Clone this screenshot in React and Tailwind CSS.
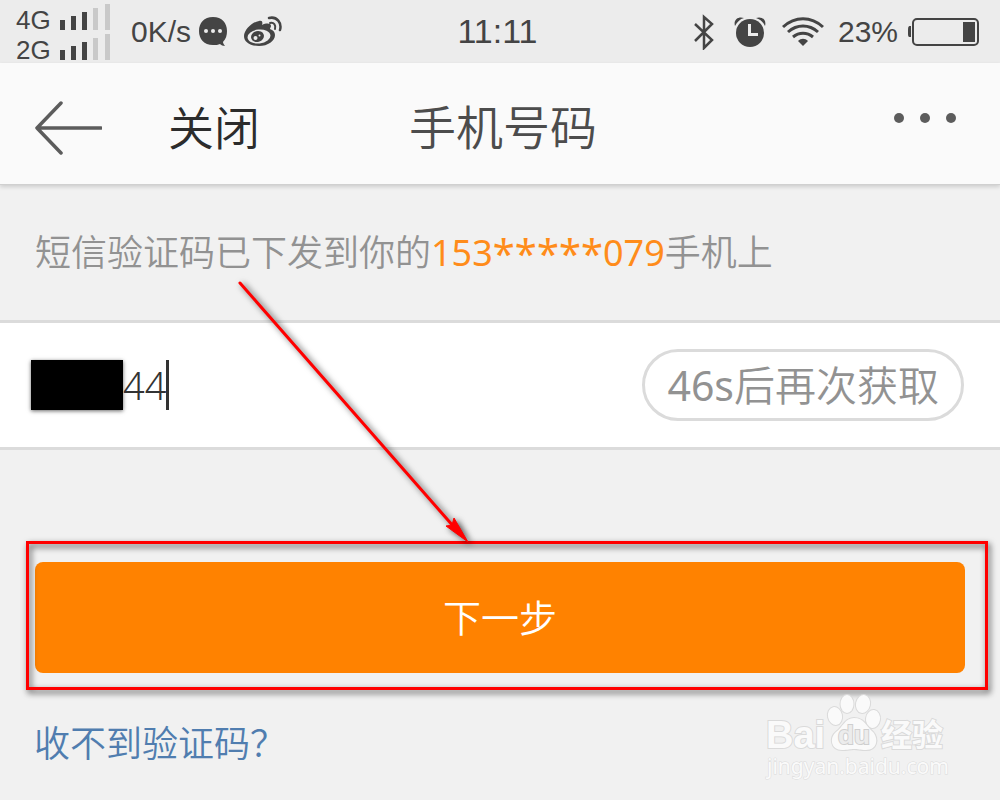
import { useState } from 'react';

const sims = ['4G', '2G'];

const bars = [
  { x: 0, h: 10, on: true },
  { x: 11, h: 14, on: true },
  { x: 22, h: 18, on: true },
  { x: 33, h: 22, on: false },
  { x: 45, h: 26, on: false },
];

function Signal() {
  return (
    <svg width="50" height="27" viewBox="0 0 50 27" aria-hidden="true">
      {bars.map((bar) => (
        <rect
          key={bar.x}
          x={bar.x}
          y={27 - bar.h}
          width="5"
          height={bar.h}
          fill={bar.on ? '#444444' : '#c9c9c9'}
        />
      ))}
    </svg>
  );
}

function ChatIcon() {
  return (
    <svg width="28" height="30" viewBox="0 0 28 30" aria-hidden="true">
      <path
        d="M14 0C5 0 0 6 0 14s5 14 14 14c3 0 5 0 7-1 1 1 3 2 5 2-1-1-2-3-2-4 3-3 4-7 4-11C28 6 23 0 14 0z"
        fill="#444444"
      />
      <circle cx="7" cy="14" r="2" fill="#ececec" />
      <circle cx="14" cy="14" r="2" fill="#ececec" />
      <circle cx="21" cy="14" r="2" fill="#ececec" />
    </svg>
  );
}

function WeiboIcon() {
  return (
    <svg width="40" height="32" viewBox="0 0 40 32" aria-hidden="true">
      <path
        d="M16 5c3-1 4 1 3 4 4-2 9-2 9 1 0 1-1 2-1 3 3 1 5 3 5 6 0 6-7 11-16 11C7 30 1 26 1 20 1 14 9 6 16 5z"
        fill="#444444"
      />
      <ellipse cx="16" cy="20.500" rx="11.500" ry="7" fill="#ececec" transform="rotate(-6 16 20.500)" />
      <ellipse cx="14.500" cy="20.500" rx="6.500" ry="5.500" fill="#444444" transform="rotate(-15 14.500 20.500)" />
      <circle cx="12.500" cy="22" r="2" fill="#ececec" />
      <circle cx="16.500" cy="19.500" r="1" fill="#ececec" />
      <path d="M27 7c4-1 6 2 5 6" fill="none" stroke="#444444" strokeWidth="2" strokeLinecap="round" />
      <path d="M26 2c8-2 13 5 11 12" fill="none" stroke="#444444" strokeWidth="2.500" strokeLinecap="round" />
    </svg>
  );
}

function BluetoothIcon() {
  return (
    <svg width="20" height="36" viewBox="0 0 20 36" aria-hidden="true">
      <path d="M1 10l17 16-8 8V3l8 7L1 27" fill="none" stroke="#444444" strokeWidth="2.500" />
    </svg>
  );
}

function AlarmIcon() {
  return (
    <svg width="32" height="32" viewBox="0 0 32 32" aria-hidden="true">
      <circle cx="16" cy="17" r="14" fill="#444444" />
      <path d="M1 10C-1 3 5 0 10 2 6 3 3 6 1 10zM31 10c2-7-4-10-9-8 4 1 7 4 9 8z" fill="#444444" />
      <path d="M15.500 8v10.500H24" fill="none" stroke="#ececec" strokeWidth="3" />
    </svg>
  );
}

function WifiIcon() {
  return (
    <svg width="42" height="30" viewBox="0 0 42 30" aria-hidden="true">
      <g fill="none" stroke="#444444" strokeWidth="3">
        <path d="M1 10C13-1 29-1 41 10" />
        <path d="M6 15c9-8 21-8 30 0" />
        <path d="M11 20c6-5 14-5 20 0" />
      </g>
      <path d="M16 24c3-3 7-3 10 0l-5 5z" fill="#444444" />
    </svg>
  );
}

function BatteryIcon() {
  return (
    <svg width="72" height="30" viewBox="0 0 72 30" aria-hidden="true">
      <path d="M4 9H3C1 9 1 11 1 15s0 5 2 5h1z" fill="#444444" />
      <rect x="6" y="2" width="65" height="26" rx="4" fill="none" stroke="#444444" strokeWidth="2" />
      <rect x="56" y="5" width="12" height="20" fill="#444444" />
    </svg>
  );
}

function StatusBar() {
  return (
    <div className="grid grid-cols-[1fr_auto_1fr] items-center h-[63px] pl-4 pr-[21px] bg-[#ececec] text-[#444444] font-['Liberation_Sans',sans-serif]">
      <div className="flex items-center">
        <div className="grid gap-[3px]">
          {sims.map((sim) => (
            <div key={sim} className="flex items-start gap-2 h-[27px] text-[26px] leading-[34px]">
              <span className="w-9">{sim}</span>
              <Signal />
            </div>
          ))}
        </div>
        <span className="ml-[21px] mr-2 text-[30px]">0K/s</span>
        <ChatIcon />
        <span className="ml-4">
          <WeiboIcon />
        </span>
      </div>
      <span className="text-[34px]">11:11</span>
      <div className="flex items-center justify-end">
        <BluetoothIcon />
        <span className="ml-5 mr-4">
          <AlarmIcon />
        </span>
        <WifiIcon />
        <span className="ml-[14px] mr-[9px] text-[30px]">23%</span>
        <BatteryIcon />
      </div>
    </div>
  );
}

function Header() {
  return (
    <header className="relative grid grid-cols-[1fr_auto_1fr] items-center h-[122px] pl-[34px] pr-7 pt-2 bg-[#fafafa] border-b border-[#d0d0d0] shadow-[0_2px_4px_rgba(0,0,0,0.15)]">
      <div className="flex items-center gap-[66px]">
        <button type="button" aria-label="返回">
          <svg width="68" height="54" viewBox="0 0 68 54" aria-hidden="true">
            <path
              d="M27 2L3 27l24 25M3 27h64"
              fill="none"
              stroke="#5c5c5c"
              strokeWidth="3.500"
              strokeLinecap="round"
              strokeLinejoin="round"
            />
          </svg>
        </button>
        <button type="button" className="text-[46px] font-[350] text-[#2c2c2c]">关闭</button>
      </div>
      <h1 className="text-[47px] font-[350] text-[#4c4c4c]">手机号码</h1>
      <button type="button" aria-label="更多" className="justify-self-end flex gap-4 mr-4 pb-5">
        <span className="size-[10px] rounded-full bg-[#5c5c5c]" />
        <span className="size-[10px] rounded-full bg-[#5c5c5c]" />
        <span className="size-[10px] rounded-full bg-[#5c5c5c]" />
      </button>
    </header>
  );
}

function Watermark() {
  return (
    <svg
      width="190"
      height="90"
      viewBox="0 0 190 90"
      className="absolute right-[46px] top-0"
      fill="#fafafa"
      stroke="#dadada"
      strokeWidth="2"
      paintOrder="stroke"
    >
      <text x="2" y="55" fontSize="38" fontWeight="700" fontFamily="Liberation Sans, sans-serif">Bai</text>
      <ellipse cx="71" cy="23" rx="7" ry="9" transform="rotate(-12 71 23)" />
      <ellipse cx="83" cy="11" rx="6.500" ry="9" />
      <ellipse cx="99" cy="11" rx="7" ry="9" transform="rotate(12 99 11)" />
      <ellipse cx="109" cy="26" rx="7" ry="9" transform="rotate(8 109 26)" />
      <path d="M90 25c-9 0-11 9-18 14-7 6-5 18 6 18 6 0 8-1 12-1s6 1 12 1c11 0 13-11 7-18-7-6-9-14-19-14z" />
      <text x="74" y="51" fontSize="26" fontWeight="700" fill="#ececec" stroke="#cfcfcf" fontFamily="Liberation Sans, sans-serif">du</text>
      <text x="117" y="53" fontSize="31" fontWeight="700" fontFamily="Noto Sans CJK SC, sans-serif">经验</text>
      <text x="3" y="81" fontSize="21" strokeWidth="1" fontFamily="Noto Sans, sans-serif">jingyan.baidu.com</text>
    </svg>
  );
}

export default function App() {
  const [code, setCode] = useState('44');

  return (
    <div className="min-h-screen bg-[#f1f1f1] font-['Noto_Sans','Noto_Sans_CJK_SC',sans-serif]">
      <StatusBar />
      <Header />

      <p className="flex items-center h-[135px] px-[35px] text-[36px] font-[350] text-[#929292]">
        <span>短信验证码已下发到你的</span>
        <span className="flex items-center font-normal text-[#ff8c1a]">
          153<span className="text-[40px] leading-[54px]">*****</span>079
        </span>
        <span>手机上</span>
      </p>

      <div className="flex items-center justify-between h-[130px] pl-[31px] pr-9 bg-white border-y-3 border-[#dbdbdb]">
        <div className="flex items-center">
          {/* Hidden digits */}
          <span className="w-[92px] h-[50px] bg-black shadow-[0_1px_4px_rgba(0,0,0,0.6)]" />
          <input
            aria-label="验证码"
            inputMode="numeric"
            value={code}
            onChange={(e) => setCode(e.target.value)}
            className="w-[43px] h-[50px] text-[38px] font-light text-[#333333] outline-none"
          />
          <span className="w-[3px] h-[50px] bg-[#333333]" />
        </div>
        <button
          type="button"
          className="h-[72px] px-[22px] rounded-full border-3 border-[#dbdbdb] text-[41px] leading-[60px] font-[350] text-[#929292]"
        >
          <span className="font-normal">46s</span>后再次获取
        </button>
      </div>

      {/* Submit, with the highlight frame and pointer over it */}
      <div className="relative mx-[35px] mt-[112px]">
        <button type="button" className="w-full h-[111px] rounded-lg bg-[#ff8200] text-[38px] font-[350] text-white">
          下一步
        </button>
        <div className="absolute -left-[9px] -right-[23px] -top-[21px] -bottom-[17px] border-3 border-[#ff0000] drop-shadow-[2px_3px_3px_rgba(0,0,0,0.7)] pointer-events-none" />
        <svg
          width="240"
          height="270"
          viewBox="0 0 240 270"
          className="absolute left-[200px] -top-[284px] drop-shadow-[3px_2px_3px_rgba(0,0,0,0.7)] pointer-events-none"
          aria-hidden="true"
        >
          <path d="M5 5l214 244" fill="none" stroke="#ff0000" strokeWidth="3" strokeLinecap="round" />
          <path d="M233 264l-22-16 6-1 2-7z" fill="#ff0000" stroke="#ff0000" />
        </svg>
      </div>

      <div className="relative flex h-[106px] mt-5 px-[34px] pt-6">
        <a href="#help" className="text-[36px] leading-[54px] font-[350] text-[#507daf]">收不到验证码？</a>
        <Watermark />
      </div>
    </div>
  );
}
